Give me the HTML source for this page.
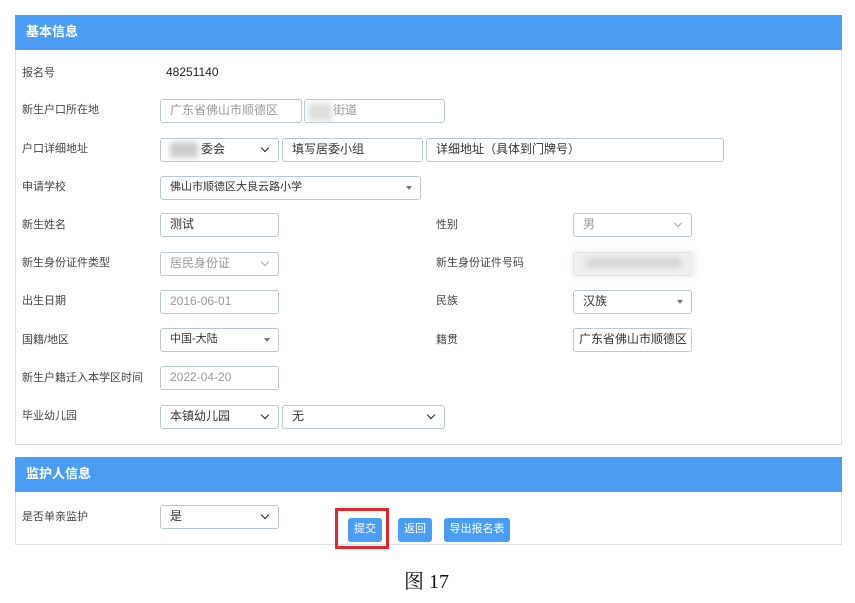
<!DOCTYPE html>
<html><head><meta charset="utf-8"><style>
*{margin:0;padding:0;box-sizing:border-box}
body{width:855px;height:603px;background:#fff;position:relative;font-family:"Liberation Sans","Noto Sans CJK SC",sans-serif;overflow:hidden}
.a{position:absolute}
.panel{position:absolute;left:15px;width:827px;border:1px solid #dcdfe6;background:#fff}
.hd{position:absolute;left:15px;width:827px;height:35px;background:#4a9cf5;color:#fff;font-weight:bold;font-size:13px;padding:0 0 0 11px;line-height:33px}
.lb{position:absolute;font-size:11px;color:#444}
.in{position:absolute;height:24px;border:1px solid #b8c6d6;border-radius:3px;background:#fff;font-size:12px;color:#333;padding:0 0 0 9px;line-height:21px;white-space:nowrap;overflow:hidden}
.g{color:#999}
.tri{position:absolute;right:8px;top:9px;border-left:3px solid transparent;border-right:3px solid transparent;border-top:4px solid #777}
.v{position:absolute;right:10px;top:6px;width:6px;height:6px;border-right:1.5px solid #222;border-bottom:1.5px solid #222;transform:rotate(45deg)}
.vl{border-color:#aaa;border-width:1px}
.btn{position:absolute;background:#4a9cf5;color:#fff;font-size:11px;border-radius:3px;height:24px;line-height:23px;text-align:center}
.blur{position:absolute;background:#ddd;filter:blur(3px)}
</style></head><body>
<div class="panel" style="top:15px;height:430px"></div>
<div class="hd" style="top:15px">基本信息</div>
<div class="lb" style="left:22px;top:64px">报名号</div>
<div class="a" style="left:166px;top:65px;font-size:12px;color:#222">48251140</div>

<div class="lb" style="left:22px;top:101px">新生户口所在地</div>
<div class="in g" style="left:160px;top:99px;width:142px">广东省佛山市顺德区</div>
<div class="in g" style="left:304px;top:99px;width:141px;padding-left:28px">街道</div>
<div class="blur" style="left:308px;top:103px;width:24px;height:18px"></div>

<div class="lb" style="left:22px;top:140px">户口详细地址</div>
<div class="in" style="left:160px;top:138px;width:119px;padding-left:40px">委会<div class="v"></div></div>
<div class="blur" style="left:170px;top:142px;width:28px;height:16px;background:#ccc"></div>
<div class="in" style="left:282px;top:138px;width:141px">填写居委小组</div>
<div class="in" style="left:426px;top:138px;width:298px">详细地址（具体到门牌号）</div>

<div class="lb" style="left:22px;top:178px">申请学校</div>
<div class="in" style="left:160px;top:176px;width:261px;font-size:11px">佛山市顺德区大良云路小学<div class="tri"></div></div>

<div class="lb" style="left:22px;top:216px">新生姓名</div>
<div class="in" style="left:160px;top:213px;width:119px">测试</div>
<div class="lb" style="left:436px;top:216px">性别</div>
<div class="in g" style="left:573px;top:213px;width:119px">男<div class="v vl"></div></div>

<div class="lb" style="left:22px;top:254px">新生身份证件类型</div>
<div class="in g" style="left:160px;top:252px;width:119px">居民身份证<div class="v vl"></div></div>
<div class="lb" style="left:436px;top:254px">新生身份证件号码</div>
<div class="in" style="left:573px;top:252px;width:119px"></div>
<div class="blur" style="left:572px;top:251px;width:124px;height:26px;background:#eee"></div>
<div class="blur" style="left:586px;top:258px;width:95px;height:10px;background:#d6d6d6"></div>

<div class="lb" style="left:22px;top:292px">出生日期</div>
<div class="in g" style="left:160px;top:290px;width:119px">2016-06-01</div>
<div class="lb" style="left:436px;top:292px">民族</div>
<div class="in" style="left:573px;top:290px;width:119px">汉族<div class="tri"></div></div>

<div class="lb" style="left:22px;top:331px">国籍/地区</div>
<div class="in" style="left:160px;top:328px;width:119px;font-size:11px">中国-大陆<div class="tri"></div></div>
<div class="lb" style="left:436px;top:331px">籍贯</div>
<div class="in" style="left:573px;top:328px;width:119px;padding-left:5px">广东省佛山市顺德区</div>

<div class="lb" style="left:22px;top:369px">新生户籍迁入本学区时间</div>
<div class="in g" style="left:160px;top:366px;width:119px">2022-04-20</div>

<div class="lb" style="left:22px;top:407px">毕业幼儿园</div>
<div class="in" style="left:160px;top:405px;width:119px">本镇幼儿园<div class="v"></div></div>
<div class="in" style="left:282px;top:405px;width:163px">无<div class="v"></div></div>

<div class="panel" style="top:457px;height:88px"></div>
<div class="hd" style="top:457px">监护人信息</div>
<div class="lb" style="left:22px;top:508px">是否单亲监护</div>
<div class="in" style="left:160px;top:505px;width:119px">是<div class="v"></div></div>
<div class="a" style="left:335px;top:508px;width:54px;height:41px;border:3px solid #e8262e"></div>
<div class="btn" style="left:348px;top:518px;width:34px">提交</div>
<div class="btn" style="left:398px;top:518px;width:34px">返回</div>
<div class="btn" style="left:444px;top:518px;width:66px">导出报名表</div>
<div class="a" style="left:404px;top:565px;font-family:'Liberation Serif','Noto Serif CJK SC',serif;font-size:20px;color:#111">图 17</div>
</body></html>
